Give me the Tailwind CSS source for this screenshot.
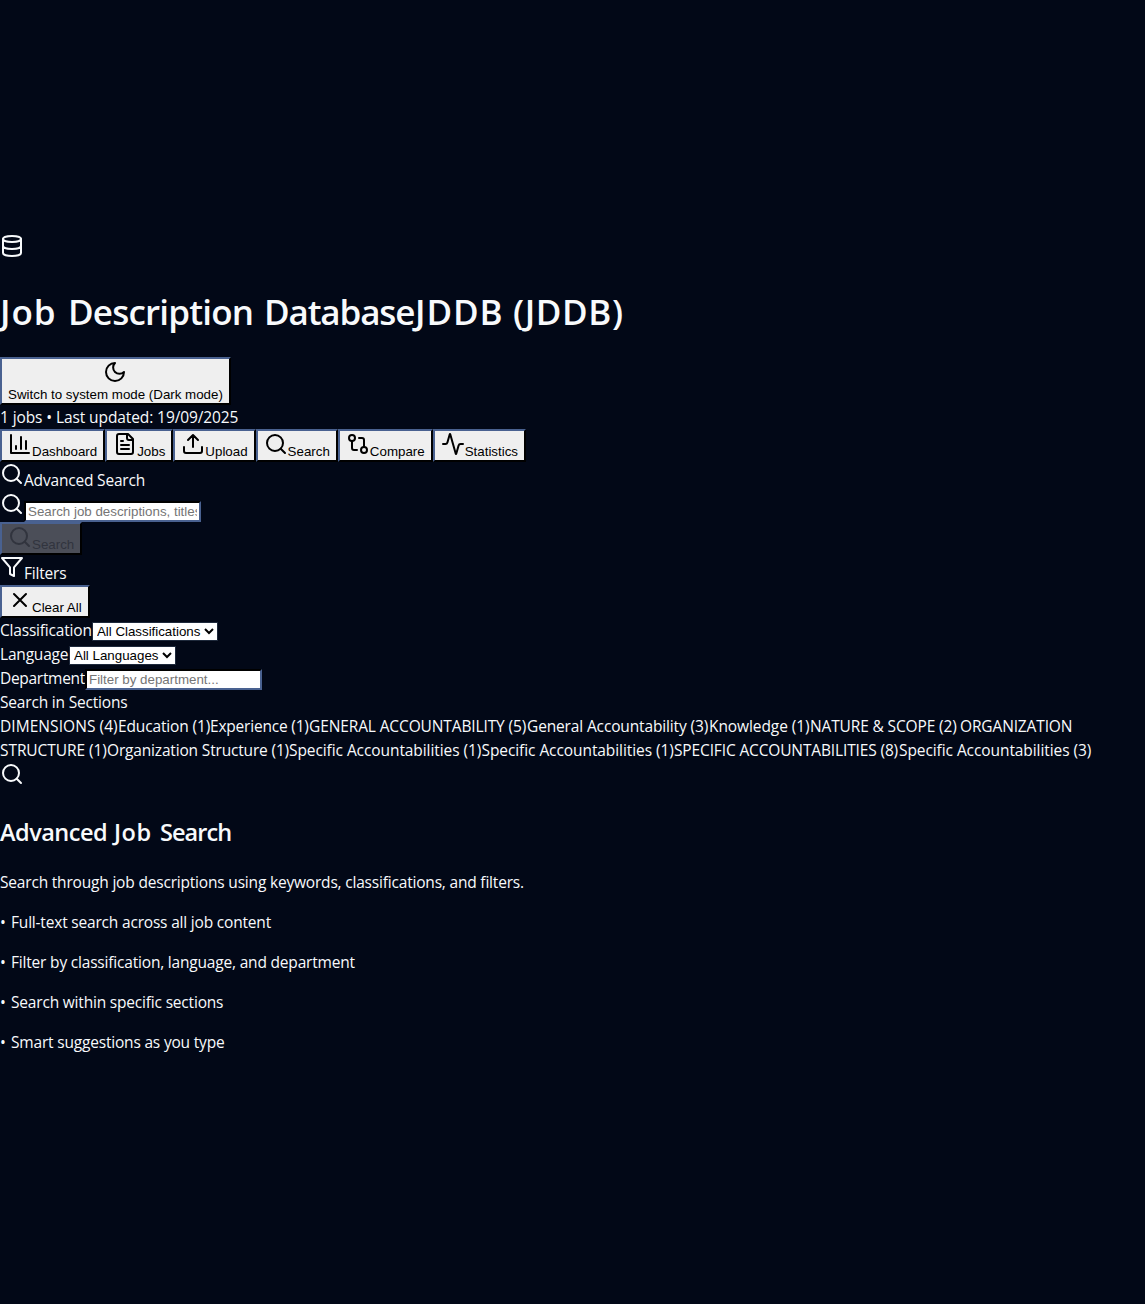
<!DOCTYPE html>
<html lang="en"><head><meta charset="utf-8"><title>Job Description Database</title>
<script src="https://cdn.jsdelivr.net/npm/@tailwindcss/browser@4"></script></head>
<body class="bg-[#020817] text-[#f8fafc] h-[1304px] overflow-hidden pt-[234px] font-['Open_Sans',sans-serif] text-[15.5px] leading-6 tracking-[-0.19px] whitespace-nowrap">
<svg width="0" height="0" class="absolute"><defs>
<symbol id="search" viewBox="0 0 24 24"><circle cx="11" cy="11" r="8"/><path d="m21 21-4.3-4.3"/></symbol>
</defs></svg>
<header>
<svg class="block size-6 fill-none stroke-current stroke-2" viewBox="0 0 24 24" stroke-linecap="round" stroke-linejoin="round"><ellipse cx="12" cy="5" rx="9" ry="3"/><path d="M3 5v14a9 3 0 0 0 18 0V5M3 12a9 3 0 0 0 18 0"/></svg>
<h1 class="flex mt-[30px] h-[69px] leading-[48px] text-[35px] font-semibold"><span class="w-[68px] tracking-[0.9px]">Job</span> <span class="w-[196px] tracking-[-0.8px]">Description</span> <span class="w-[151px] tracking-[-1.15px]">Database</span><span class="w-[98px] tracking-[0.9px]">JDDB</span> <span class="tracking-[0.6px]">(JDDB)</span></h1>
<button class="flex flex-col items-center w-[231px] h-12 px-1.5 pt-px border-2 border-t-[#496190] border-l-[#496190] border-r-black border-b-black bg-[#efefef] text-black font-['Liberation_Sans',sans-serif] text-[13.333px] leading-[15px] tracking-normal"><svg class="block mr-px size-6 shrink-0 fill-none stroke-current stroke-2" viewBox="0 0 24 24" stroke-linecap="round" stroke-linejoin="round"><path d="M12 3a6 6 0 0 0 9 9 9 9 0 1 1-9-9Z"/></svg><span class="mt-[3px]">Switch to system mode (Dark mode)</span></button>
<div class="h-6 tracking-[-0.1px]">1 jobs • Last updated: 19/09/2025</div>
</header>
<nav class="flex h-[33px] text-black font-['Liberation_Sans',sans-serif] text-[13.333px] leading-[15px] tracking-normal">
<button class="flex px-1.5 pt-px border-2 border-t-[#496190] border-l-[#496190] border-r-black border-b-black bg-[#efefef]"><svg class="size-6 shrink-0 fill-none stroke-current stroke-2" viewBox="0 0 24 24" stroke-linecap="round" stroke-linejoin="round"><path d="M3 3v18h18M18 17V9M13 17V5M8 17v-3"/></svg><span class="mt-3">Dashboard</span></button>
<button class="flex px-1.5 pt-px border-2 border-t-[#496190] border-l-[#496190] border-r-black border-b-black bg-[#efefef]"><svg class="size-6 shrink-0 fill-none stroke-current stroke-2" viewBox="0 0 24 24" stroke-linecap="round" stroke-linejoin="round"><path d="M15 2H6a2 2 0 0 0-2 2v16a2 2 0 0 0 2 2h12a2 2 0 0 0 2-2V7ZM14 2v4a2 2 0 0 0 2 2h4M10 9H8M16 13H8M16 17H8"/></svg><span class="mt-3">Jobs</span></button>
<button class="flex px-1.5 pt-px border-2 border-t-[#496190] border-l-[#496190] border-r-black border-b-black bg-[#efefef]"><svg class="size-6 shrink-0 fill-none stroke-current stroke-2" viewBox="0 0 24 24" stroke-linecap="round" stroke-linejoin="round"><path d="M21 15v4a2 2 0 0 1-2 2H5a2 2 0 0 1-2-2v-4M17 8l-5-5-5 5M12 3v12"/></svg><span class="mt-3">Upload</span></button>
<button class="flex px-1.5 pt-px border-2 border-t-[#496190] border-l-[#496190] border-r-black border-b-black bg-[#efefef]"><svg class="size-6 shrink-0 fill-none stroke-current stroke-2" viewBox="0 0 24 24" stroke-linecap="round"><use href="#search"/></svg><span class="mt-3">Search</span></button>
<button class="flex px-1.5 pt-px border-2 border-t-[#496190] border-l-[#496190] border-r-black border-b-black bg-[#efefef]"><svg class="size-6 shrink-0 fill-none stroke-current stroke-2" viewBox="0 0 24 24" stroke-linecap="round" stroke-linejoin="round"><circle cx="6" cy="6" r="3"/><circle cx="18" cy="18" r="3"/><path d="M13 6h3a2 2 0 0 1 2 2v7M11 18H8a2 2 0 0 1-2-2V9"/></svg><span class="mt-3">Compare</span></button>
<button class="flex px-1.5 pt-px border-2 border-t-[#496190] border-l-[#496190] border-r-black border-b-black bg-[#efefef]"><svg class="size-6 shrink-0 fill-none stroke-current stroke-2" viewBox="0 0 24 24" stroke-linecap="round" stroke-linejoin="round"><path d="M22 12h-2.48a2 2 0 0 0-1.93 1.46l-2.35 8.36a.25.25 0 0 1-.48 0L9.24 2.18a.25.25 0 0 0-.48 0l-2.35 8.36A2 2 0 0 1 4.49 12H2"/></svg><span class="mt-3">Statistics</span></button>
</nav>
<main>
<div class="flex h-[30px]"><svg class="size-6 shrink-0 fill-none stroke-current stroke-2" viewBox="0 0 24 24" stroke-linecap="round"><circle cx="11" cy="11" r="8"/><path d="m21 21-4.3-4.3"/></svg><span class="mt-1.5">Advanced Search</span></div>
<div class="flex h-[30px]"><svg class="size-6 shrink-0 fill-none stroke-current stroke-2" viewBox="0 0 24 24" stroke-linecap="round"><circle cx="11" cy="11" r="8"/><path d="m21 21-4.3-4.3"/></svg><input placeholder="Search job descriptions, titles, and more" class="mt-[9px] w-[177px] h-[21px] px-0.5 border-2 border-t-black border-l-black border-r-[#496190] border-b-[#496190] bg-white placeholder:text-[#757575] text-black font-['Liberation_Sans',sans-serif] text-[13.333px] tracking-normal"></div>
<button class="flex w-[81.5px] px-1.5 pt-px h-[33px] border-2 border-t-[#496190] border-l-[#496190] border-r-black border-b-black bg-[#4b4e58] text-[#31343e] font-['Liberation_Sans',sans-serif] text-[13.333px] leading-[15px] tracking-normal"><svg class="size-6 shrink-0 fill-none stroke-current stroke-2" viewBox="0 0 24 24" stroke-linecap="round"><use href="#search"/></svg><span class="mt-3">Search</span></button>
<div class="flex h-[30px]"><svg class="size-6 shrink-0 fill-none stroke-current stroke-2" viewBox="0 0 24 24" stroke-linejoin="round"><path d="M22 3H2l8 9.46V19l4 2v-8.54Z"/></svg><span class="mt-1.5">Filters</span></div>
<button class="flex w-[89.5px] px-1.5 pt-px h-[33px] border-2 border-t-[#496190] border-l-[#496190] border-r-black border-b-black bg-[#efefef] text-black font-['Liberation_Sans',sans-serif] text-[13.333px] leading-[15px] tracking-normal"><svg class="size-6 shrink-0 fill-none stroke-current stroke-2" viewBox="0 0 24 24" stroke-linecap="round"><path d="M18 6 6 18M6 6l12 12"/></svg><span class="mt-3">Clear All</span></button>
<div class="flex h-6"><label class="w-[92px]">Classification</label><select class="mt-1 w-[126px] h-[19px] border border-[#1e293b] bg-white text-black font-['Liberation_Sans',sans-serif] text-[13.333px] tracking-[-0.02px]"><option>All Classifications</option></select></div>
<div class="flex h-6"><label class="w-[69px]">Language</label><select class="mt-1 w-[107px] h-[19px] border border-[#1e293b] bg-white text-black font-['Liberation_Sans',sans-serif] text-[13.333px] tracking-normal"><option>All Languages</option></select></div>
<div class="flex h-6"><label class="w-[85px] tracking-[-0.3px]">Department</label><input placeholder="Filter by department..." class="mt-[3px] w-[177px] h-[21px] px-0.5 border-2 border-t-black border-l-black border-r-[#496190] border-b-[#496190] bg-white placeholder:text-[#757575] text-black font-['Liberation_Sans',sans-serif] text-[13.333px] tracking-normal"></div>
<div class="h-6">Search in Sections</div>
<div class="flex h-6 tracking-[-0.14px]"><span class="w-[118px] tracking-[0.06px]">DIMENSIONS (4)</span><span class="w-[92px]">Education (1)</span><span class="w-[99px] tracking-[-0.2px]">Experience (1)</span><span class="w-[218px] tracking-[-0.12px]">GENERAL ACCOUNTABILITY (5)</span><span class="w-[182px]">General Accountability (3)</span><span class="w-[101px] tracking-[-0.08px]">Knowledge (1)</span><span class="w-[150px]">NATURE &amp; SCOPE (2)</span><span>ORGANIZATION</span></div>
<div class="flex h-6 tracking-[-0.08px]"><span class="w-[107px]">STRUCTURE (1)</span><span class="w-[182px] tracking-[-0.17px]">Organization Structure (1)</span><span class="w-[192.5px]">Specific Accountabilities (1)</span><span class="w-[192.5px]">Specific Accountabilities (1)</span><span class="w-[225px] tracking-[-0.14px]">SPECIFIC ACCOUNTABILITIES (8)</span><span>Specific Accountabilities (3)</span></div>
<svg class="block size-6 fill-none stroke-current stroke-2" viewBox="0 0 24 24" stroke-linecap="round"><circle cx="11" cy="11" r="8"/><path d="m21 21-4.3-4.3"/></svg>
<h2 class="flex mt-[30px] h-[54px] leading-8 text-[23.5px] font-semibold tracking-[-0.5px]"><span class="w-[114px]">Advanced</span> <span class="w-[46px] tracking-[0.5px]">Job</span> <span class="tracking-[-0.95px]">Search</span></h2>
<div class="flex flex-col gap-4"><p>Search through job descriptions using keywords, classifications, and filters.</p><p><span class="inline-block w-[11px]">•</span>Full-text search across all job content</p><p><span class="inline-block w-[11px]">•</span>Filter by classification, language, and department</p><p><span class="inline-block w-[11px]">•</span>Search within specific sections</p><p><span class="inline-block w-[11px]">•</span>Smart suggestions as you type</p></div>
</main>
</body></html>
